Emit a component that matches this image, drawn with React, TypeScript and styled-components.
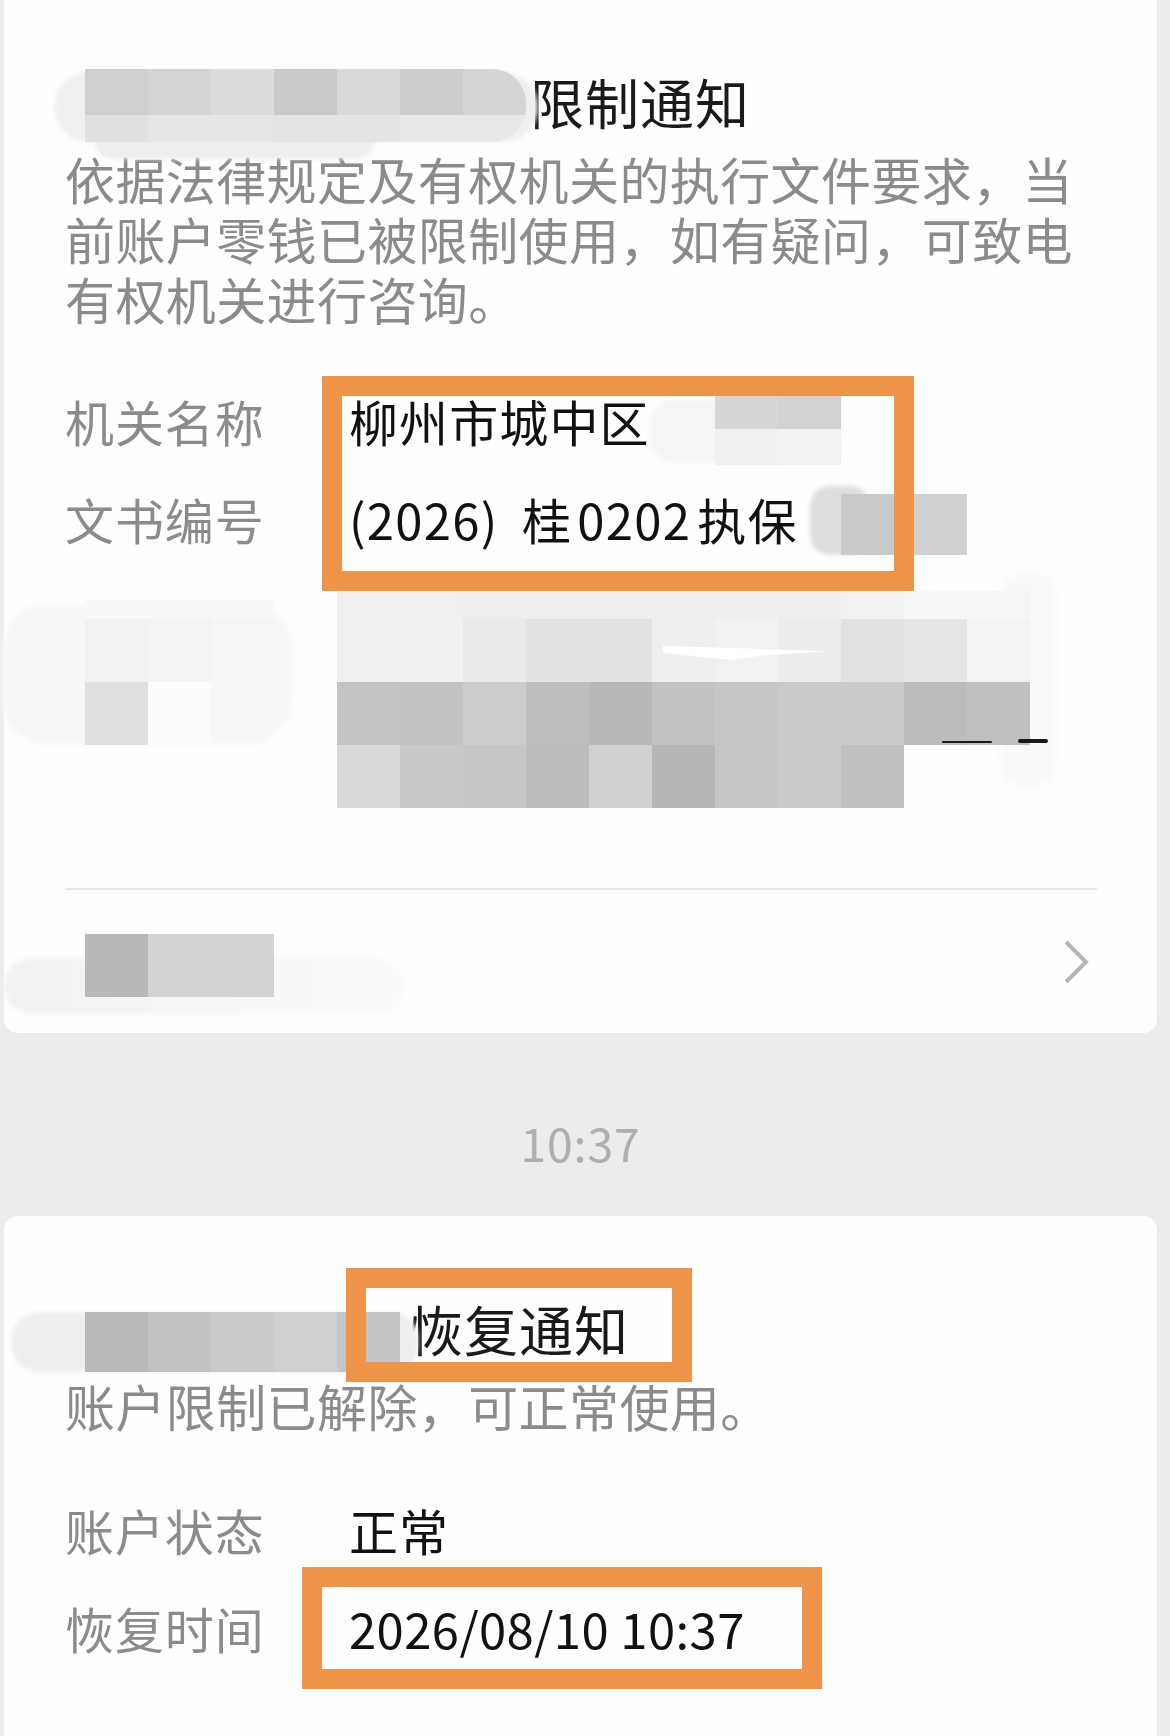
import React from "react";
import styled, { createGlobalStyle } from "styled-components";

const GlobalStyle = createGlobalStyle`
  html, body {
    margin: 0;
    padding: 0;
    background: #ececec;
  }
  * {
    box-sizing: border-box;
  }
`;

const Page = styled.div`
  position: relative;
  width: 1170px;
  height: 1736px;
  overflow: hidden;
  display: flex;
  flex-direction: column;
  background: #ececec;
  font-family: "Noto Sans CJK SC", "Noto Sans", sans-serif;
  font-weight: 400;
`;

const Card = styled.section<{ $grow?: boolean }>`
  display: flex;
  flex-direction: column;
  width: 1153px;
  margin-left: 4px;
  padding: 0 60px 0 61px;
  background: #fefefe;
  border-radius: ${(p) => (p.$grow ? "14px 14px 0 0" : "0 0 14px 14px")};
  height: ${(p) => (p.$grow ? "auto" : "1033px")};
  flex: ${(p) => (p.$grow ? "1" : "none")};
`;

const Title = styled.h2<{ $top: number; $indent: number }>`
  margin: 0;
  padding: ${(p) => p.$top}px 0 0 ${(p) => p.$indent}px;
  font-size: 54px;
  letter-spacing: 1px;
  line-height: 60px;
  font-weight: 400;
  color: #1a1a1a;
`;

const Notice = styled.p`
  margin: 16px 0 0;
  font-size: 50px;
  letter-spacing: 0.4px;
  line-height: 60px;
  color: #8b8b8b;
`;

const Details = styled.dl<{ $gap: number }>`
  display: grid;
  grid-template-columns: 284px 1fr;
  grid-auto-rows: 98px;
  align-items: center;
  margin: ${(p) => p.$gap}px 0 0;
`;

const Label = styled.dt`
  font-size: 49px;
  letter-spacing: 0.9px;
  line-height: 60px;
  color: #8b8b8b;
`;

const Value = styled.dd<{ $tracking?: number; $wordGap?: number }>`
  margin: 0;
  font-size: 49px;
  letter-spacing: ${(p) => p.$tracking ?? 1.1}px;
  word-spacing: ${(p) => p.$wordGap ?? 0}px;
  line-height: 60px;
  color: #111;
  white-space: nowrap;
`;

const CaseDigits = styled.span`
  margin: 0 6px 0 5px;
`;

const LinkRow = styled.div`
  display: flex;
  align-items: center;
  justify-content: flex-end;
  height: 145px;
  margin-top: auto;
  padding-right: 8px;
  border-top: 2px solid #e6e6e6;
`;

const Stamp = styled.div`
  width: 1153px;
  margin-left: 4px;
  padding: 87px 0 52px;
  text-align: center;
  font-size: 46px;
  letter-spacing: 1px;
  line-height: 44px;
  color: #aeaeae;
`;

const Overlay = styled.div`
  position: absolute;
  inset: 0;
  pointer-events: none;
`;

const Smudge = styled.div<{ $x: number; $y: number; $w: number; $h: number; $c: string; $r?: number }>`
  position: absolute;
  left: ${(p) => p.$x}px;
  top: ${(p) => p.$y}px;
  width: ${(p) => p.$w}px;
  height: ${(p) => p.$h}px;
  background: ${(p) => p.$c};
  border-radius: ${(p) => p.$r ?? 24}px;
  filter: blur(2px);
`;

const Sliver = styled.div`
  position: absolute;
  left: 663px;
  top: 646px;
  width: 162px;
  height: 14px;
  background: #fff;
  clip-path: polygon(0 0, 55% 18%, 100% 38%, 60% 70%, 42% 100%, 0 50%);
`;

const Speck = styled.div<{ $x: number; $y: number; $w: number; $thin?: boolean }>`
  position: absolute;
  left: ${(p) => p.$x}px;
  top: ${(p) => p.$y}px;
  width: ${(p) => p.$w}px;
  height: ${(p) => (p.$thin ? 2 : 4)}px;
  background: #1a1a1a;
  border-radius: 2px;
`;

const Mosaic = styled.div<{ $x: number; $y: number; $round?: boolean }>`
  position: absolute;
  left: ${(p) => p.$x}px;
  top: ${(p) => p.$y}px;
  overflow: hidden;
  border-radius: ${(p) => (p.$round ? "0 34px 34px 0" : "0")};
`;

const MosaicRow = styled.div<{ $h: number }>`
  display: flex;
  height: ${(p) => p.$h}px;
`;

const MosaicCell = styled.div<{ $c: string }>`
  width: 63px;
  flex: none;
  background: #${(p) => p.$c};
`;

const Frame = styled.div<{ $x: number; $y: number; $w: number; $h: number }>`
  position: absolute;
  left: ${(p) => p.$x}px;
  top: ${(p) => p.$y}px;
  width: ${(p) => p.$w}px;
  height: ${(p) => p.$h}px;
  border: 20px solid #ee9347;
`;

type Block = { x: number; y: number; round?: boolean; rows: { h: number; cells: string[] }[] };

const blocks: Block[] = [
  {
    x: 85,
    y: 69,
    round: true,
    rows: [
      { h: 46, cells: ["cfcfcf", "d4d4d4", "dcdcdc", "c9c9c9", "d9d9d9", "cccccc", "d5d5d5"] },
      { h: 27, cells: ["e0e0e0", "e6e6e6", "e6e6e6", "e4e4e4", "e4e4e4", "e8e8e8", "e8e8e8"] },
    ],
  },
  {
    x: 715,
    y: 396,
    rows: [
      { h: 33, cells: ["d6d6d6", "d2d2d2"] },
      { h: 36, cells: ["f0f0f0", "f2f2f2"] },
    ],
  },
  { x: 841, y: 494, rows: [{ h: 61, cells: ["c9c9c9", "d0d0d0"] }] },
  {
    x: 337,
    y: 591,
    rows: [
      { h: 28, cells: ["eef0f0", "eef0f0", "edefef", "edefef", "eceeef", "eceeef", "eceeef", "eeeeee", "f1f1f1", "f6f6f6", "f6f6f6"] },
      { h: 63, cells: ["efefef", "f0f0f0", "e9e9e9", "e2e2e2", "e2e2e2", "eeeeee", "f1f1f1", "ececec", "e1e1e1", "e5e5e5", "f3f3f3"] },
      { h: 63, cells: ["c4c4c4", "c2c2c2", "cccccc", "bebebe", "b8b8b8", "c2c2c2", "c6c6c6", "cacaca", "cacaca", "bcbcbc", "c0c0c0"] },
      { h: 63, cells: ["d9d9d9", "c8c8c8", "c6c6c6", "bcbcbc", "d0d0d0", "b6b6b6", "c6c6c6", "cacaca", "c0c0c0"] },
    ],
  },
  {
    x: 85,
    y: 600,
    rows: [
      { h: 19, cells: ["f8f8f8", "f8f8f8", "f8f8f8"] },
      { h: 63, cells: ["f1f1f1", "f3f3f3", "f6f6f6"] },
      { h: 63, cells: ["e0e0e0", "fbfbfb"] },
    ],
  },
  { x: 85, y: 934, rows: [{ h: 63, cells: ["b8b8b8", "d2d2d2", "d2d2d2"] }] },
  {
    x: 85,
    y: 1312,
    rows: [{ h: 60, cells: ["b9b9b9", "c2c2c2", "cacaca", "cfcfcf", "c4c4c4"] }],
  },
];

const Chevron = () => (
  <svg width="26" height="44" viewBox="0 0 26 44" fill="none">
    <path d="M3 2 L23 22 L3 42" stroke="#b5b5b5" strokeWidth="4" />
  </svg>
);

const App = () => {
  return (
    <Page>
      <GlobalStyle />
      <Card>
        <Title $top={72} $indent={465}>
          限制通知
        </Title>
        <Notice>
          依据法律规定及有权机关的执行文件要求，当前账户零钱已被限制使用，如有疑问，可致电有权机关进行咨询。
        </Notice>
        <Details $gap={44}>
          <Label>机关名称</Label>
          <Value>柳州市城中区</Value>
          <Label>文书编号</Label>
          <Value $tracking={1.3} $wordGap={11}>
            (2026) 桂<CaseDigits>0202</CaseDigits>执保
          </Value>
        </Details>
        <LinkRow>
          <Chevron />
        </LinkRow>
      </Card>
      <Stamp>10:37</Stamp>
      <Card $grow>
        <Title $top={83} $indent={344}>
          恢复通知
        </Title>
        <Notice>账户限制已解除，可正常使用。</Notice>
        <Details $gap={46}>
          <Label>账户状态</Label>
          <Value>正常</Value>
          <Label>恢复时间</Label>
          <Value $tracking={0.4} $wordGap={0}>
            2026/08/10 10:37
          </Value>
        </Details>
      </Card>
      <Overlay>
        <Smudge $x={54} $y={72} $w={484} $h={70} $c="#efefef" $r={36} />
        <Smudge $x={95} $y={120} $w={280} $h={39} $c="#ededed" $r={18} />
        <Smudge $x={650} $y={400} $w={191} $h={62} $c="#f5f5f5" $r={24} />
        <Smudge $x={810} $y={486} $w={60} $h={69} $c="#dedede" $r={20} />
        <Smudge $x={2} $y={604} $w={290} $h={140} $c="#f7f7f7" $r={44} />
        <Smudge $x={1000} $y={572} $w={56} $h={216} $c="#f9f9f9" $r={26} />
        <Smudge $x={4} $y={958} $w={400} $h={56} $c="linear-gradient(90deg, #f1f1f1, #fbfbfb)" $r={28} />
        <Smudge $x={12} $y={1312} $w={406} $h={60} $c="#eeeeee" $r={26} />
        {blocks.map((block, i) => (
          <Mosaic key={i} $x={block.x} $y={block.y} $round={block.round}>
            {block.rows.map((row, j) => (
              <MosaicRow key={j} $h={row.h}>
                {row.cells.map((c, k) => (
                  <MosaicCell key={k} $c={c} />
                ))}
              </MosaicRow>
            ))}
          </Mosaic>
        ))}
        <Sliver />
        <Speck $x={1018} $y={739} $w={30} />
        <Speck $x={942} $y={741} $w={50} $thin />
        <Frame $x={322} $y={376} $w={592} $h={215} />
        <Frame $x={346} $y={1268} $w={346} $h={114} />
        <Frame $x={302} $y={1567} $w={520} $h={122} />
      </Overlay>
    </Page>
  );
};

export default App;
